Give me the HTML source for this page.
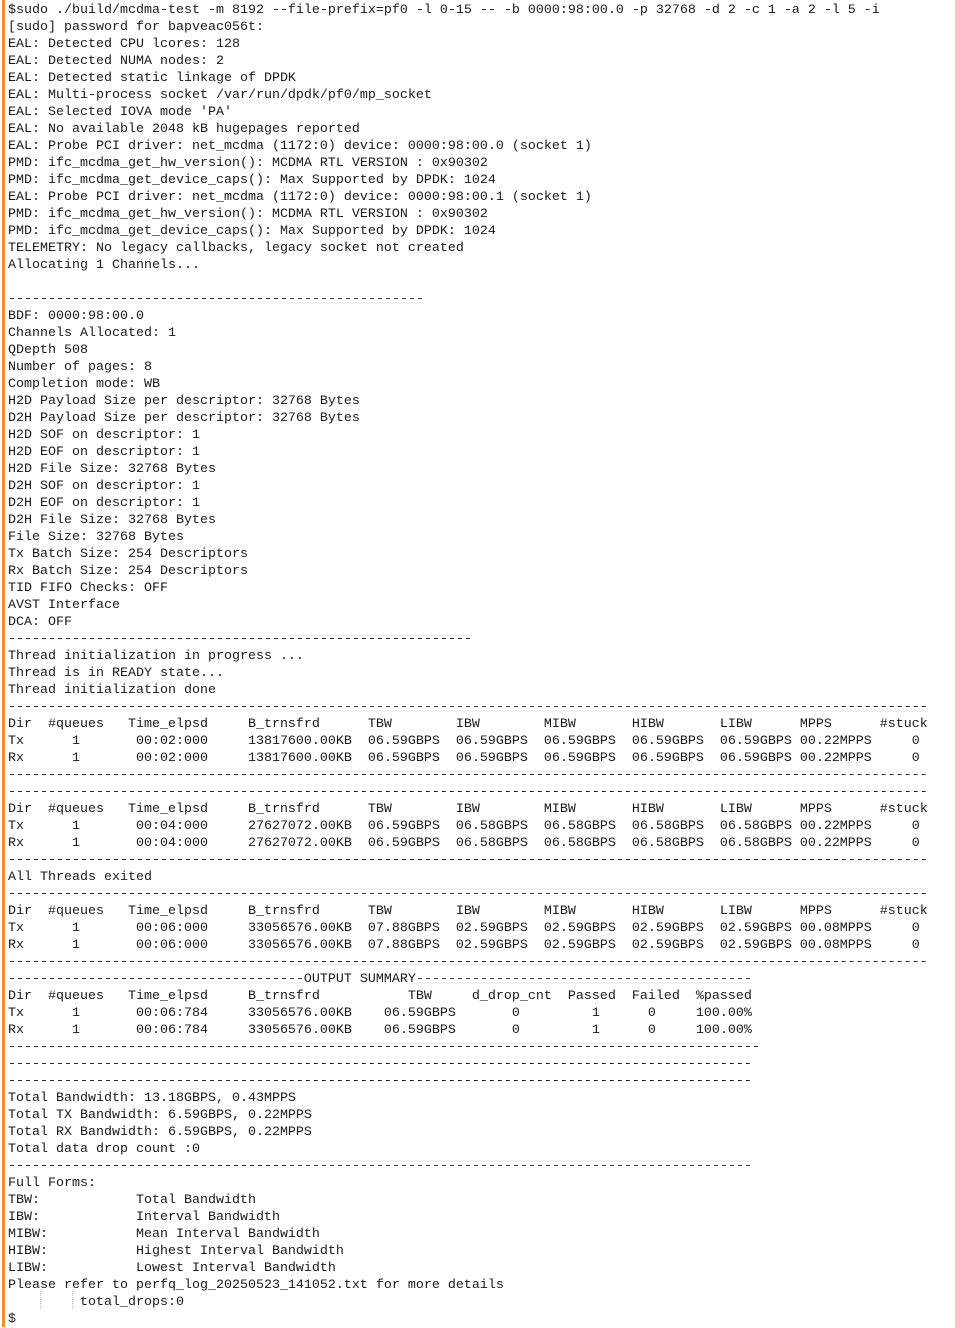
<!DOCTYPE html>
<html><head><meta charset="utf-8"><style>
html,body{margin:0;padding:0;background:#fff;width:955px;height:1327px;overflow:hidden}
.bar{position:absolute;left:2px;top:0;width:3px;height:1327px;background:#f0902a}
pre{position:absolute;left:8px;top:2px;margin:0;font-family:"Liberation Mono","Courier New",monospace;font-size:13.33px;line-height:17px;color:#1a1a1a;white-space:pre}
.g{position:absolute;top:1291px;width:0;height:17px;border-left:1px dotted #bbb}
</style></head><body>
<div class="bar"></div>
<div class="g" style="left:40px"></div><div class="g" style="left:72px"></div>
<pre>$sudo ./build/mcdma-test -m 8192 --file-prefix=pf0 -l 0-15 -- -b 0000:98:00.0 -p 32768 -d 2 -c 1 -a 2 -l 5 -i
[sudo] password for bapveac056t:
EAL: Detected CPU lcores: 128
EAL: Detected NUMA nodes: 2
EAL: Detected static linkage of DPDK
EAL: Multi-process socket /var/run/dpdk/pf0/mp_socket
EAL: Selected IOVA mode 'PA'
EAL: No available 2048 kB hugepages reported
EAL: Probe PCI driver: net_mcdma (1172:0) device: 0000:98:00.0 (socket 1)
PMD: ifc_mcdma_get_hw_version(): MCDMA RTL VERSION : 0x90302
PMD: ifc_mcdma_get_device_caps(): Max Supported by DPDK: 1024
EAL: Probe PCI driver: net_mcdma (1172:0) device: 0000:98:00.1 (socket 1)
PMD: ifc_mcdma_get_hw_version(): MCDMA RTL VERSION : 0x90302
PMD: ifc_mcdma_get_device_caps(): Max Supported by DPDK: 1024
TELEMETRY: No legacy callbacks, legacy socket not created
Allocating 1 Channels...

----------------------------------------------------
BDF: 0000:98:00.0
Channels Allocated: 1
QDepth 508
Number of pages: 8
Completion mode: WB
H2D Payload Size per descriptor: 32768 Bytes
D2H Payload Size per descriptor: 32768 Bytes
H2D SOF on descriptor: 1
H2D EOF on descriptor: 1
H2D File Size: 32768 Bytes
D2H SOF on descriptor: 1
D2H EOF on descriptor: 1
D2H File Size: 32768 Bytes
File Size: 32768 Bytes
Tx Batch Size: 254 Descriptors
Rx Batch Size: 254 Descriptors
TID FIFO Checks: OFF
AVST Interface
DCA: OFF
----------------------------------------------------------
Thread initialization in progress ...
Thread is in READY state...
Thread initialization done
-------------------------------------------------------------------------------------------------------------------
Dir  #queues   Time_elpsd     B_trnsfrd      TBW        IBW        MIBW       HIBW       LIBW      MPPS      #stuck
Tx      1       00:02:000     13817600.00KB  06.59GBPS  06.59GBPS  06.59GBPS  06.59GBPS  06.59GBPS 00.22MPPS     0
Rx      1       00:02:000     13817600.00KB  06.59GBPS  06.59GBPS  06.59GBPS  06.59GBPS  06.59GBPS 00.22MPPS     0
-------------------------------------------------------------------------------------------------------------------
-------------------------------------------------------------------------------------------------------------------
Dir  #queues   Time_elpsd     B_trnsfrd      TBW        IBW        MIBW       HIBW       LIBW      MPPS      #stuck
Tx      1       00:04:000     27627072.00KB  06.59GBPS  06.58GBPS  06.58GBPS  06.58GBPS  06.58GBPS 00.22MPPS     0
Rx      1       00:04:000     27627072.00KB  06.59GBPS  06.58GBPS  06.58GBPS  06.58GBPS  06.58GBPS 00.22MPPS     0
-------------------------------------------------------------------------------------------------------------------
All Threads exited
-------------------------------------------------------------------------------------------------------------------
Dir  #queues   Time_elpsd     B_trnsfrd      TBW        IBW        MIBW       HIBW       LIBW      MPPS      #stuck
Tx      1       00:06:000     33056576.00KB  07.88GBPS  02.59GBPS  02.59GBPS  02.59GBPS  02.59GBPS 00.08MPPS     0
Rx      1       00:06:000     33056576.00KB  07.88GBPS  02.59GBPS  02.59GBPS  02.59GBPS  02.59GBPS 00.08MPPS     0
-------------------------------------------------------------------------------------------------------------------
-------------------------------------OUTPUT SUMMARY------------------------------------------
Dir  #queues   Time_elpsd     B_trnsfrd           TBW     d_drop_cnt  Passed  Failed  %passed
Tx      1       00:06:784     33056576.00KB    06.59GBPS       0         1      0     100.00%
Rx      1       00:06:784     33056576.00KB    06.59GBPS       0         1      0     100.00%
----------------------------------------------------------------------------------------------
---------------------------------------------------------------------------------------------
---------------------------------------------------------------------------------------------
Total Bandwidth: 13.18GBPS, 0.43MPPS
Total TX Bandwidth: 6.59GBPS, 0.22MPPS
Total RX Bandwidth: 6.59GBPS, 0.22MPPS
Total data drop count :0
---------------------------------------------------------------------------------------------
Full Forms:
TBW:            Total Bandwidth
IBW:            Interval Bandwidth
MIBW:           Mean Interval Bandwidth
HIBW:           Highest Interval Bandwidth
LIBW:           Lowest Interval Bandwidth
Please refer to perfq_log_20250523_141052.txt for more details
         total_drops:0
$</pre>
</body></html>
